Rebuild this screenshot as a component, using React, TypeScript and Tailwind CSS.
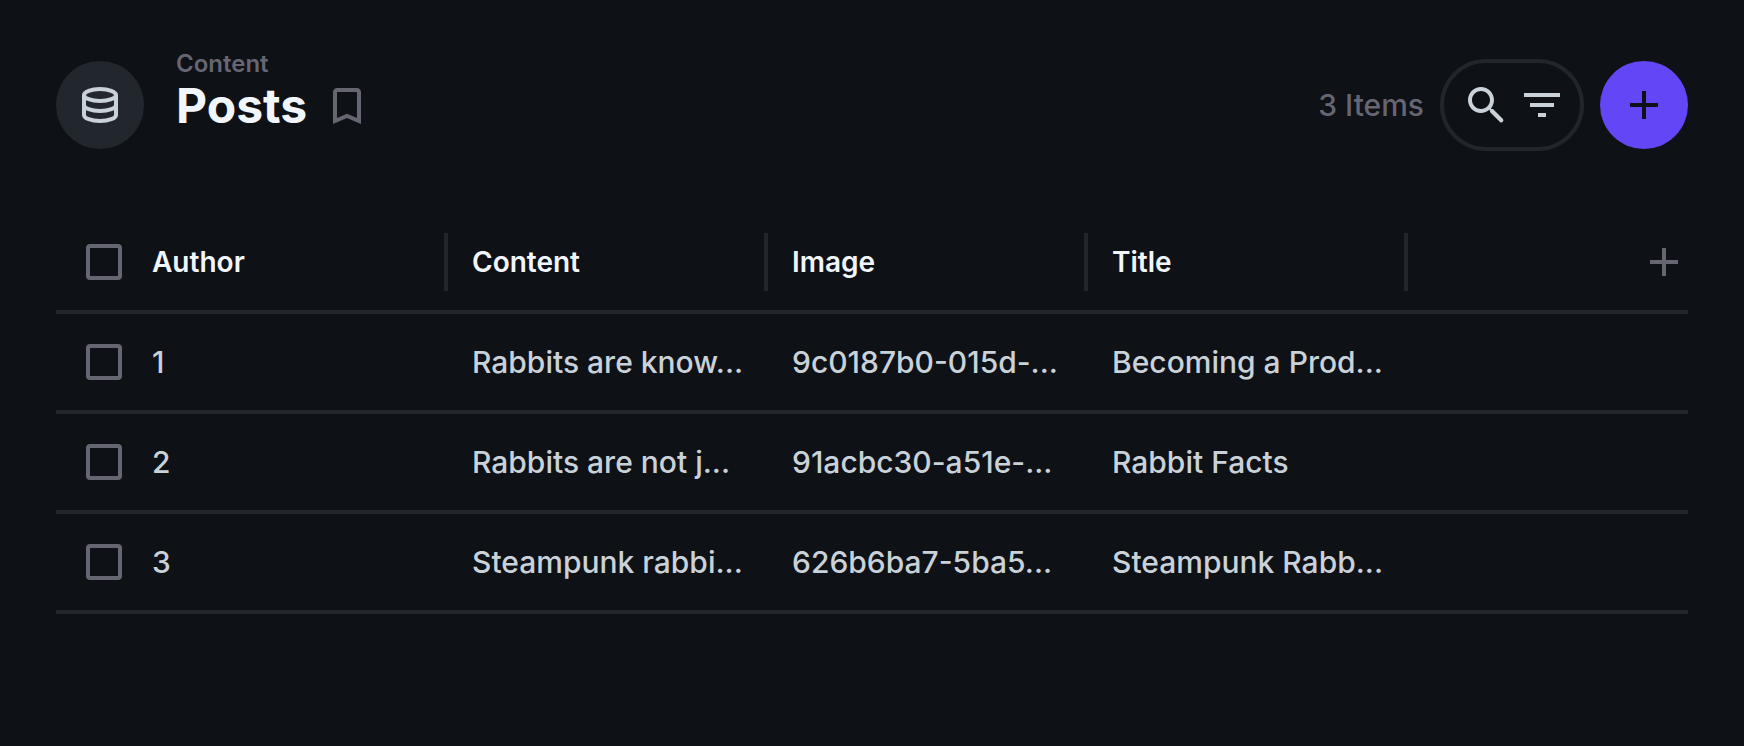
import type { ReactNode } from 'react';

type Post = { author: number; content: string; image: string; title: string };

const columns = ['Author', 'Content', 'Image', 'Title'];

const posts: Post[] = [
  { author: 1, content: 'Rabbits are know...', image: '9c0187b0-015d-...', title: 'Becoming a Prod...' },
  { author: 2, content: 'Rabbits are not j...', image: '91acbc30-a51e-...', title: 'Rabbit Facts' },
  { author: 3, content: 'Steampunk rabbi...', image: '626b6ba7-5ba5...', title: 'Steampunk Rabb...' },
];

function Icon({ children }: { children: ReactNode }) {
  return (
    <svg viewBox="0 0 24 24" className="block size-12 shrink-0" fill="currentColor" aria-hidden="true">
      {children}
    </svg>
  );
}

function PlusIcon() {
  return (
    <Icon>
      <path d="M19 13h-6v6h-2v-6H5v-2h6V5h2v6h6v2z" />
    </Icon>
  );
}

function Checkbox({ label }: { label: string }) {
  return (
    <input
      type="checkbox"
      aria-label={label}
      className="block size-9 appearance-none rounded-sm border-4 border-[#666672] checked:bg-[#6346f5]"
    />
  );
}

function Header() {
  return (
    <header className="flex items-center">
      <div className="flex size-[88px] shrink-0 items-center justify-center rounded-full bg-[#22262d] text-[#c9d1d9]">
        <Icon>
          <g fill="none" stroke="currentColor" strokeWidth="2">
            <ellipse cx="12" cy="7" rx="8" ry="3" />
            <path d="M4 7v10c0 1.66 3.58 3 8 3s8-1.34 8-3V7" />
            <path d="M4 12c0 1.66 3.58 3 8 3s8-1.34 8-3" />
          </g>
        </Icon>
      </div>
      <div className="ml-8 flex flex-col gap-1 pb-[30px]">
        <a href="#content" className="text-2xl leading-7 font-semibold text-[#666672]">
          Content
        </a>
        <div className="flex items-center gap-4">
          <h1 className="text-5xl leading-[48px] font-bold text-[#f0f6fc]">Posts</h1>
          <button type="button" aria-label="Bookmark" className="text-[#666672]">
            <Icon>
              <path d="M17 3H7c-1.1 0-2 .9-2 2v16l7-3 7 3V5c0-1.1-.9-2-2-2zm0 15l-5-2.18L7 18V5h10v13z" />
            </Icon>
          </button>
        </div>
      </div>
      <div className="ml-auto flex items-center gap-4">
        <span className="text-[30px] leading-9 font-medium text-[#666672]">3 Items</span>
        <div className="flex h-[92px] items-center gap-2 rounded-full border-4 border-[#21262b] pr-3.5 pl-[18px] text-[#c9d1d9]">
          <button type="button" aria-label="Search">
            <Icon>
              <path d="M15.5 14h-.79l-.28-.27C15.41 12.59 16 11.11 16 9.5 16 5.91 13.09 3 9.5 3S3 5.91 3 9.5 5.91 16 9.5 16c1.61 0 3.09-.59 4.23-1.57l.27.28v.79l5 4.99q.75.6 1.4-.1.6-.7.09-1.39l-4.99-5zm-6 0C7.01 14 5 11.99 5 9.5S7.01 5 9.5 5 14 7.01 14 9.5 11.99 14 9.5 14z" />
            </Icon>
          </button>
          <button type="button" aria-label="Filter">
            <Icon>
              <path d="M10 18h4v-2h-4v2zM3 6v2h18V6H3zm3 7h12v-2H6v2z" />
            </Icon>
          </button>
        </div>
        <button
          type="button"
          aria-label="Create item"
          className="flex size-[88px] items-center justify-center rounded-full bg-[#6346f5] text-[#0e1116]"
        >
          <PlusIcon />
        </button>
      </div>
    </header>
  );
}

export default function App() {
  return (
    <main className="min-h-screen bg-[#0e1116] px-14 py-[50px] font-['Inter',sans-serif] antialiased">
      <Header />
      <table className="mt-[54px] w-full table-fixed border-separate border-spacing-0 text-left">
        <colgroup>
          <col className="w-[72px]" />
          <col className="w-80" />
          <col className="w-80" />
          <col className="w-80" />
          <col className="w-80" />
          <col />
        </colgroup>
        <thead>
          <tr className="h-[100px] text-[28px] leading-9 text-[#f0f6fc]">
            <th className="border-b-4 border-[#21262b] p-0 pl-[30px]">
              <Checkbox label="Select all" />
            </th>
            {columns.map((name) => (
              <th key={name} scope="col" className="border-b-4 border-[#21262b] p-0 font-semibold">
                <div className="flex h-[58px] items-center border-r-4 border-[#21262b] px-6">{name}</div>
              </th>
            ))}
            <th className="border-b-4 border-[#21262b] p-0 text-[#666672]">
              <button type="button" aria-label="Add field" className="ml-auto block">
                <PlusIcon />
              </button>
            </th>
          </tr>
        </thead>
        <tbody>
          {posts.map((post) => (
            <tr key={post.author} className="h-[100px] text-[30px] leading-9 font-medium text-[#c9d1d9]">
              <td className="border-b-4 border-[#21262b] p-0 pl-[30px]">
                <Checkbox label={`Select item ${post.author}`} />
              </td>
              {[post.author, post.content, post.image, post.title].map((value) => (
                <td key={value} className="truncate border-b-4 border-[#21262b] px-6 py-0">
                  {value}
                </td>
              ))}
              <td className="border-b-4 border-[#21262b]" />
            </tr>
          ))}
        </tbody>
      </table>
    </main>
  );
}
